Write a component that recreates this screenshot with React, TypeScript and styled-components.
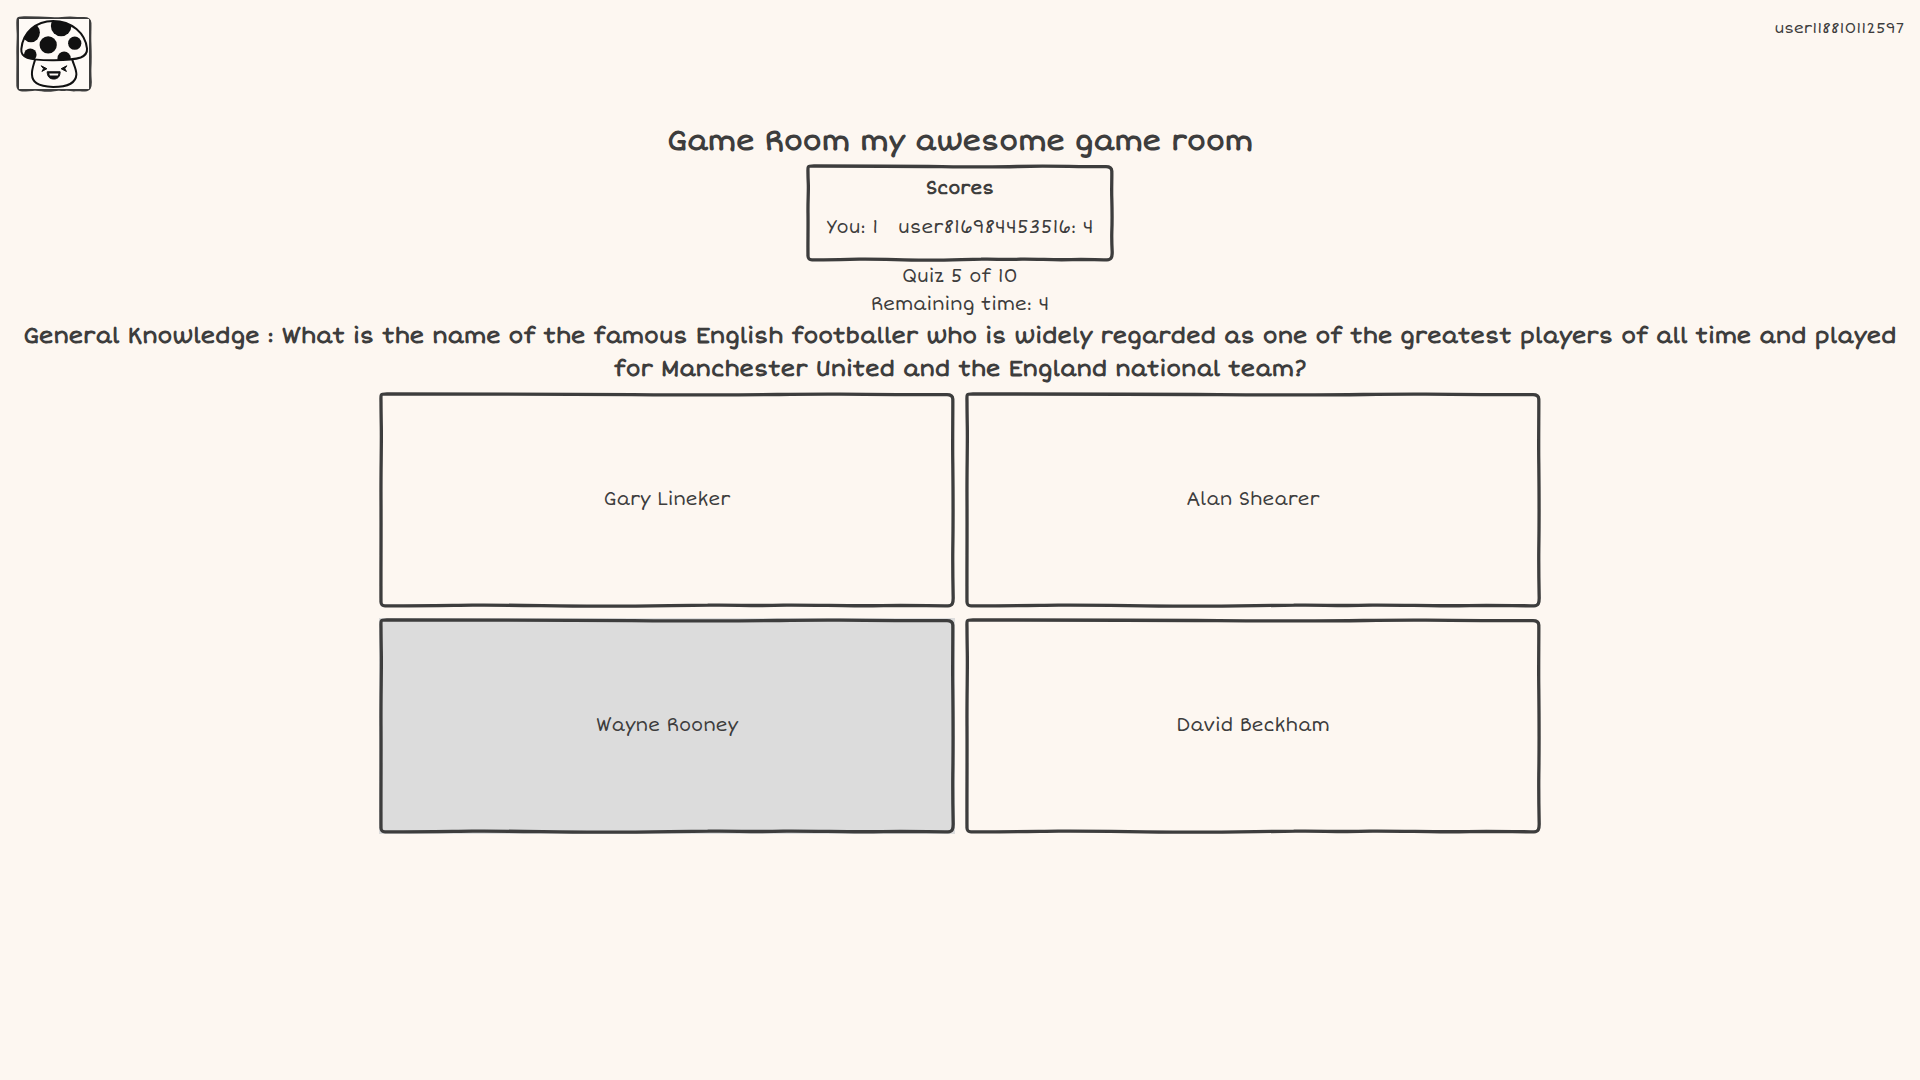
import React, { useState } from "react";
import styled, { createGlobalStyle, css } from "styled-components";

const ink = "#3d3d3d";
const paper = "#fdf7f1";

const sketchLine =
  "M2 10 C2 7 1.7 4 2.3 3 C3 1.8 5 2 10 2 C25 2 35 2.2 45 2.6 C53 3 60 3.1 66 2.5 C72 1.8 78 2.2 83 2.6 C87 2.8 89 2.6 92 2.6 C96 2.6 97.6 4 97.8 7 " +
  "C98 15 97.4 25 97.8 35 C98.2 50 98.2 60 97.8 70 C97.6 80 98 86 98.2 90 C98.2 95 97.5 97.6 93 97.8 " +
  "C88 98 86 97.2 81 97.6 C76 98.2 72 97 67 97.2 C62 98 60 96.8 56 97.2 C50 97.6 46 98.4 40 98.2 C33 98 28 96.9 22 97.2 C16 97.6 12 98 6 97.8 C3 97.8 2.2 97 2 94 " +
  "C1.8 80 2.2 65 2 50 C1.8 38 2.6 28 2.3 20 C2.1 15 2 12 2 10 Z";

const sketchImage = `url("data:image/svg+xml;utf8,${encodeURIComponent(
  `<svg xmlns="http://www.w3.org/2000/svg" width="100" height="100" viewBox="0 0 100 100"><path d="${sketchLine}" fill="none" stroke="${ink}" stroke-width="3.3"/></svg>`
)}")`;

const sketchBorder = css`
  border: 10px solid transparent;
  border-image: ${sketchImage} 10 / 10px stretch;
`;

const GlobalStyle = createGlobalStyle`
  *, *::before, *::after { box-sizing: border-box; }
  body {
    margin: 0;
    background: ${paper};
    color: ${ink};
    font-family: "Short Stack", "DejaVu Sans", sans-serif;
    font-size: 18px;
    line-height: 28px;
  }
`;

const Header = styled.header`
  display: flex;
  justify-content: space-between;
  align-items: flex-start;
  padding: 16px;
`;

const HomeLink = styled.a`
  display: block;
  border: 3px solid transparent;
  border-image: ${sketchImage} 10 / 10px stretch;
`;

const Logo = styled.svg`
  display: block;
  width: 70px;
  height: 70px;
  background: #fefaf6;
`;

const UserName = styled.span`
  font-size: 15px;
  line-height: 24px;
`;

const Room = styled.main`
  display: flex;
  flex-direction: column;
  align-items: center;
  padding: 12px 16px;
  text-align: center;
`;

const RoomTitle = styled.h2`
  margin: 0 0 2px;
  font-size: 28px;
  line-height: 42px;
`;

const ScoreBoard = styled.section`
  ${sketchBorder}
`;

const ScoreTitle = styled.h4`
  margin: 0;
  font-size: 18px;
`;

const ScoreList = styled.ul`
  display: flex;
  gap: 20px;
  margin: 0;
  padding: 11px 10px;
  list-style: none;
`;

const Status = styled.div``;

const Question = styled.h3`
  margin: 2px 0 0;
  font-size: 22px;
  line-height: 33px;
`;

const Answers = styled.div`
  display: grid;
  grid-template-columns: repeat(2, 30vw);
  grid-auto-rows: 20vh;
  gap: 10px;
  padding-top: 6px;
`;

const Answer = styled.button<{ $chosen: boolean }>`
  ${sketchBorder}
  padding: 0 6px 2px;
  background: ${(p) => (p.$chosen ? "#dcdcdc" : "transparent")};
  color: inherit;
  font: inherit;
  cursor: pointer;
`;

function Mushroom() {
  return (
    <Logo viewBox="57 57 211 211" role="img" aria-label="Mushroom">
      <defs>
        <clipPath id="cap">
          <path d="M64 148 C68 98 108 63 160 63 C216 63 257 100 262 146 C263 158 256 168 243 173 C215 183 110 184 82 174 C68 169 63 160 64 148 Z" />
        </clipPath>
      </defs>
      <g clipPath="url(#cap)" fill="#111">
        <ellipse cx="93" cy="98" rx="27" ry="29" />
        <ellipse cx="184" cy="78" rx="31" ry="31" />
        <circle cx="145" cy="135" r="26" />
        <circle cx="225" cy="130" r="20" />
        <circle cx="91" cy="165" r="19" />
        <circle cx="193" cy="175" r="20" />
      </g>
      <g fill="none" stroke="#111" strokeWidth="6" strokeLinecap="round" strokeLinejoin="round">
        <path d="M64 148 C68 98 108 63 160 63 C216 63 257 100 262 146 C263 158 256 168 243 173 C215 183 110 184 82 174 C68 169 63 160 64 148 Z" />
        <path d="M105 181 C101 195 95 210 96 224 C97 246 110 260 160 262 C212 262 229 246 230 224 C230 208 222 195 218 181" />
      </g>
      <path d="M124 198 L141 207 L126 215 L131 207 Z M201 198 L184 207 L200 215 L195 207 Z" fill="#111" stroke="#111" strokeWidth="3" strokeLinejoin="round" />
      <path d="M142 216 H181 C181 230 174 238 162 238 C149 238 142 230 142 216 Z" fill="#111" stroke="#111" strokeWidth="3" strokeLinejoin="round" />
      <path d="M148 221 H176 L174 227 H150 Z" fill="#fefaf6" />
    </Logo>
  );
}

const scores = [
  { name: "You", points: 1 },
  { name: "user816984453516", points: 4 },
];

const answers = ["Gary Lineker", "Alan Shearer", "Wayne Rooney", "David Beckham"];

export default function App() {
  const [chosen, setChosen] = useState("Wayne Rooney");
  return (
    <>
      <GlobalStyle />
      <Header>
        <HomeLink href="#">
          <Mushroom />
        </HomeLink>
        <UserName>user118810112597</UserName>
      </Header>
      <Room>
        <RoomTitle>Game Room my awesome game room</RoomTitle>
        <ScoreBoard>
          <ScoreTitle>Scores</ScoreTitle>
          <ScoreList>
            {scores.map((s) => (
              <li key={s.name}>{`${s.name}: ${s.points}`}</li>
            ))}
          </ScoreList>
        </ScoreBoard>
        <Status>Quiz 5 of 10</Status>
        <Status>Remaining time: 4</Status>
        <Question>
          General Knowledge : What is the name of the famous English footballer who is widely regarded as one of the
          greatest players of all time and played for Manchester United and the England national team?
        </Question>
        <Answers>
          {answers.map((a) => (
            <Answer key={a} type="button" $chosen={a === chosen} aria-pressed={a === chosen} onClick={() => setChosen(a)}>
              {a}
            </Answer>
          ))}
        </Answers>
      </Room>
    </>
  );
}
